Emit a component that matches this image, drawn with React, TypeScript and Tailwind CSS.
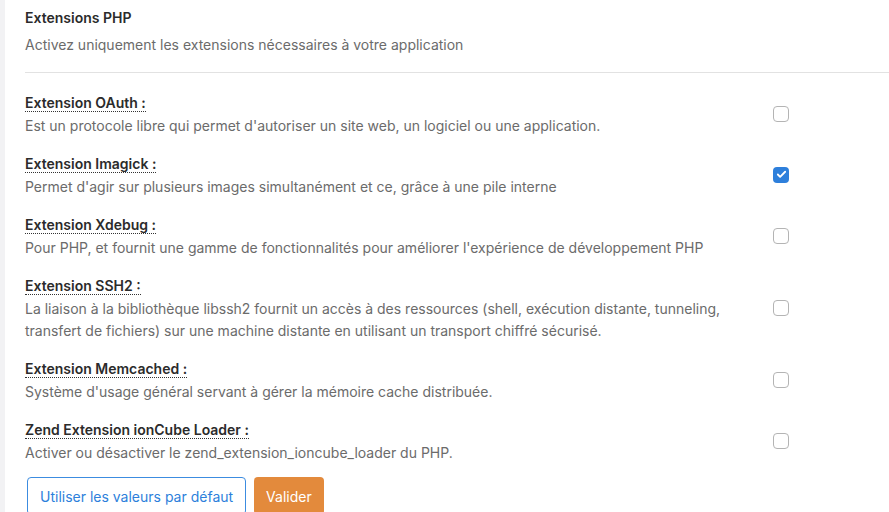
import { Check } from "lucide-react";

interface Extension {
  id: string;
  label: string;
  description: string;
  enabled: boolean;
}

const EXTENSIONS: Extension[] = [
  { id: "oauth", label: "Extension OAuth :", description: "Est un protocole libre qui permet d'autoriser un site web, un logiciel ou une application.", enabled: false },
  { id: "imagick", label: "Extension Imagick :", description: "Permet d'agir sur plusieurs images simultanément et ce, grâce à une pile interne", enabled: true },
  { id: "xdebug", label: "Extension Xdebug :", description: "Pour PHP, et fournit une gamme de fonctionnalités pour améliorer l'expérience de développement PHP", enabled: false },
  { id: "ssh2", label: "Extension SSH2 :", description: "La liaison à la bibliothèque libssh2 fournit un accès à des ressources (shell, exécution distante, tunneling, transfert de fichiers) sur une machine distante en utilisant un transport chiffré sécurisé.", enabled: false },
  { id: "memcached", label: "Extension Memcached :", description: "Système d'usage général servant à gérer la mémoire cache distribuée.", enabled: false },
  { id: "ioncube", label: "Zend Extension ionCube Loader :", description: "Activer ou désactiver le zend_extension_ioncube_loader du PHP.", enabled: false },
];

function Checkbox({ checked }: { checked: boolean }) {
  return checked ? (
    <span className="flex h-4 w-4 items-center justify-center rounded-[4px] bg-[#2d7fdb]">
      <Check size={11} strokeWidth={4} className="text-white" />
    </span>
  ) : (
    <span className="block h-4 w-4 rounded-[4px] border border-[#b4b4b4] bg-white" />
  );
}

export default function App() {
  return (
    <div className="flex min-h-[512px] bg-[#f2f2f4] font-['Inter',sans-serif]">
      <div className="ml-[5px] flex-1 bg-white pl-5 pt-[8px]">
        <h2 className="text-[14px] font-semibold leading-[20px] text-[#2b2b2b]">Extensions PHP</h2>
        <p className="mt-[7px] text-[14px] leading-[20px] text-[#6b6b6b]">
          Activez uniquement les extensions nécessaires à votre application
        </p>
        <div className="mt-[17px] h-px bg-[#e2e2e2]" />

        <div className="mt-[20px] space-y-[17px]">
          {EXTENSIONS.map(ext => (
            <div key={ext.id} className="flex items-center">
              <div className="w-[700px] text-[14px] leading-[20px]">
                <div>
                  <span className="border-b border-dotted border-[#333] font-semibold text-[#2b2b2b]">
                    {ext.label}
                  </span>
                </div>
                <p className="mt-[2px] leading-[22px] text-[#6b6b6b]">{ext.description}</p>
              </div>
              <div className="-mt-[3px] ml-[48px]">
                <Checkbox checked={ext.enabled} />
              </div>
            </div>
          ))}
        </div>

        <div className="mt-[13px] flex gap-2 pl-[2px]">
          <button className="h-[38px] rounded-[4px] border border-[#3c8ce0] bg-white px-3 text-[14px] text-[#2d7fdb]">
            Utiliser les valeurs par défaut
          </button>
          <button className="h-[38px] rounded-[4px] bg-[#e38a3c] px-3 text-[14px] text-white">Valider</button>
        </div>
      </div>
    </div>
  );
}
